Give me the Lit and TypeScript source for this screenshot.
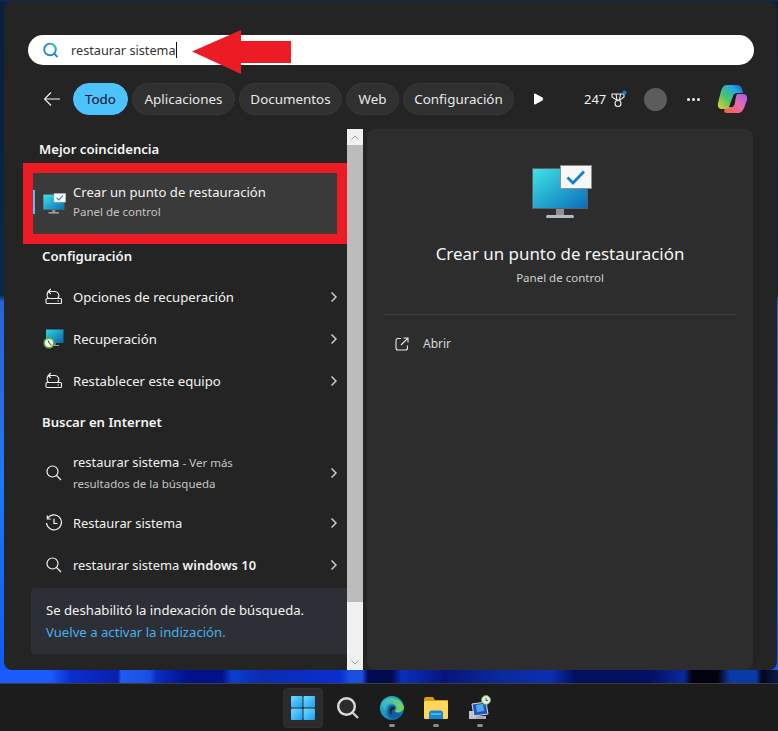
import { LitElement, html, css } from "lit";
import { customElement } from "lit/decorators.js";

const monitor = (w: number, h: number, id: string) => html`<svg width=${w} height=${h} viewBox="0 0 60 54">
  <defs><linearGradient id=${id} x1="0" y1="0" x2="1" y2="1"><stop offset="0" stop-color="#3fe4e6"/><stop offset="1" stop-color="#0a6cba"/></linearGradient></defs>
  <rect x="0.5" y="3.5" width="55" height="40" fill="url(#${id})" stroke="#5a6064" stroke-width="1"/>
  <rect x="24" y="44" width="8" height="6" fill="#8d9399"/>
  <rect x="14" y="50" width="28" height="3" rx="1.5" fill="#b4b9bd"/>
  <rect x="28.5" y="0.5" width="31" height="23" fill="#f7f7f7" stroke="#8a8f93" stroke-width="1"/>
  <path d="M35.5 12.5 L41 18 L52 6.5" fill="none" stroke="#0f7fd8" stroke-width="2.8"/>
</svg>`;

const resetIcon = html`<svg class="ic" width="18" height="18" viewBox="0 0 18 18" fill="none" stroke="#f2f2f2" stroke-width="1.1">
  <path d="M3.5 3.5 H9.5 A4 4 0 0 1 12.5 10.500"/><path d="M3.500 3.500 A5 5 0 0 0 3.500 10.500"/><path d="M5.800 1 L3.300 3.500 L5.800 6"/>
  <rect x="1" y="10.500" width="15.500" height="5" rx="1"/><path d="M12.500 13 h1.500"/>
</svg>`;

const recoveryIcon = html`<svg class="ic rec" width="21" height="20" viewBox="0 0 21 20">
  <defs><linearGradient id="rec" x1="0" y1="0" x2="1" y2="1"><stop offset="0" stop-color="#2fd6df"/><stop offset="1" stop-color="#0a63ae"/></linearGradient></defs>
  <rect x="3" y="0.500" width="17.500" height="13.500" fill="url(#rec)"/>
  <rect x="10" y="14" width="3" height="2" fill="#777"/><rect x="8" y="16" width="8" height="1" fill="#999"/>
  <circle cx="6" cy="14" r="4.800" fill="#f1f1f1" stroke="#55b52c" stroke-width="1.600"/>
  <path d="M5 11.500 L6.500 14.500 L8.500 16" fill="none" stroke="#333" stroke-width="1"/>
</svg>`;

const searchIcon = html`<svg class="ic" width="18" height="18" viewBox="0 0 18 18" fill="none" stroke="#f2f2f2" stroke-width="1.2">
  <circle cx="7.5" cy="7.5" r="5.5"/><path d="M11.5 11.5 L16 16"/>
</svg>`;

const historyIcon = html`<svg class="ic" width="18" height="18" viewBox="0 0 18 18" fill="none" stroke="#f2f2f2" stroke-width="1.2">
  <path d="M2.5 4.500 A7.5 7.5 0 1 1 1.500 9"/><path d="M2.300 1.500 V5 H5.800"/><path d="M9 4.800 V9.500 H12.500"/>
</svg>`;

const chevron = html`<svg class="chev" width="8" height="12" viewBox="0 0 8 12" fill="none" stroke="#c8c8c8" stroke-width="1.5"><path d="M1.500 1.500 L6 6 L1.500 10.500"/></svg>`;

@customElement("app-root")
export class AppRoot extends LitElement {
  static styles = css`
    :host { display: block; width: 778px; height: 731px; position: relative; overflow: hidden;
      font-family: "Noto Sans", "Open Sans", sans-serif; color: #f2f2f2; font-size: 13.15px;
      background: linear-gradient(180deg, #0d2a55 0, #0a1e3c 3px, #0b2748 295px, #2a62d8 302px, #2e6be0 400px, #1a7aff 480px, #1259f5 670px); }
    .panel { position: absolute; left: 4px; top: 1px; width: 773px; height: 669px; box-sizing: border-box;
      background: #242424; border-radius: 8px; padding: 34px 24px 0 24px; display: flex; flex-direction: column; }
    .strip { position: absolute; left: 0; top: 670px; width: 778px; height: 13px;
      background: linear-gradient(90deg, #1a5cff 0, #1a5cff 50px, #0a2fd0 70px, #0a1faa 118px, #1f5cf0 121px, #1a4fe0 150px, #0a2dc0 156px, #02108a 190px, #02108a 222px, #0a3fd0 232px, #0a2cb0 260px, #0a2fd0 340px, #1a4fe0 350px, #1a4fe0 362px, #020a50 368px, #020a50 392px, #0a30c0 402px, #06157a 445px, #0a2a9c 500px, #0a30b0 550px, #040f60 575px, #040f60 650px, #0a2a9c 684px, #02030f 692px, #02030f 718px, #0a3aa8 730px, #0a3aa8 756px, #02061c 762px, #0a1a4a 778px); }
    .search { height: 30px; background: #fff; border-radius: 15px; display: flex; align-items: center;
      padding-left: 15px; color: #333; margin-right: -1px; }
    .search span { margin-left: 12px; font-size: 12.7px; line-height: 30px; }
    .caret { width: 1px; height: 16px; background: #111; }
    .tabs { display: flex; align-items: center; height: 32px; margin-top: 18px; padding-left: 16px; }
    .back { margin-right: 13px; display: flex; }
    .tab { height: 32px; line-height: 30px; box-sizing: border-box; text-align: center; border: 1px solid #383838; background: #303030; border-radius: 16px;
      margin-right: 4px; font-size: 13.4px; color: #e8e8e8; white-space: nowrap; flex: none; }
    .tab.on { background: #4cc2ff; border-color: #4cc2ff; color: #111; }
    .t1 { width: 55px; }
    .t2 { width: 103px; }
    .t3 { width: 103px; }
    .t4 { width: 53px; }
    .t5 { width: 111px; }
    .right-tools { display: flex; align-items: center; margin-left: 15px; flex: none; }
    .count { margin-left: 40px; font-size: 13px; }
    .trophy { margin-left: 5px; }
    .avatar { width: 23px; height: 23px; border-radius: 50%; background: #5c5c5c; margin-left: 17px; }
    .dots { margin-left: 20px; display: flex; gap: 2px; }
    .dots i { width: 3px; height: 3px; border-radius: 50%; background: #eee; }
    .copilot { margin-left: 17px; display: flex; }
    .body { display: flex; margin-top: 14px; margin-left: -1px; flex: 1; min-height: 0; }
    .left { width: 324px; margin-left: -4px; display: flex; flex-direction: column; }
    .sec { font-weight: 600; font-size: 13.15px; line-height: 18px; color: #f5f5f5; margin-left: 19px; flex: none; }
    .best { margin-top: 11px; margin-left: 16px; }
    .s2 { margin-top: 3px; margin-bottom: 11px; }
    .s3 { margin-top: 11px; margin-bottom: 12px; }
    .redbox { border: 10px solid #ed1c24; height: 81px; box-sizing: border-box; background: #3a3a3a; display: flex; align-items: center; position: relative; margin-top: 5px; flex: none; }
    .redbox .bar { position: absolute; left: 0; top: 17px; width: 2px; height: 24px; background: #4cc2ff; }
    .redbox .icon { margin-left: 10px; width: 23px; display: flex; }
    .row { display: flex; align-items: center; height: 42px; padding-left: 22px; flex: none; }
    .row .ic { flex: none; }
    .row .ic.rec { margin-left: -2px; margin-right: -1px; }
    .iconbox { width: 28px; display: flex; }
    .row .lbl { flex: 1; white-space: nowrap; }
    .row .lbl.n { font-size: 12.9px; }
    .row .lbl strong { font-weight: 600; }
    .row .chev { margin-right: 9px; flex: none; }
    .row.two { height: 59px; }
    .row.two .lbl { line-height: 20px; }
    .muted { color: #c4c4c4; font-size: 11.5px; }
    .textcol { margin-left: 7px; margin-bottom: 4px; display: flex; flex-direction: column; }
    .textcol b { font-weight: 400; font-size: 13.1px; line-height: 20px; }
    .textcol small { color: #c4c4c4; font-size: 11.5px; line-height: 20px; }
    .notice { background: #2c2f36; border-radius: 4px 0 0 4px; margin: 2px 0 0 8px; height: 66px; box-sizing: border-box; flex: none;
      padding: 11px 0 0 15px; line-height: 22px; }
    .notice a { color: #4ab0e8; display: block; }
    .scroll { width: 16px; flex: none; background: #f0f0f0; display: flex; flex-direction: column; }
    .scroll .up, .scroll .dn { height: 16px; display: flex; align-items: center; justify-content: center; }
    .scroll .thumb { height: 457px; background: #bcbcbc; }
    .scroll .gap { flex: 1; }
    .detail { width: 386px; margin-left: 4px; height: 541px; background: #2d2d2d; border-radius: 8px; box-sizing: border-box;
      display: flex; flex-direction: column; align-items: center; padding-top: 36px; }
    .mon { margin-left: 4px; display: flex; }
    .dtitle { font-size: 16.9px; margin-top: 24px; line-height: 22px; color: #f5f5f5; }
    .dsub { font-size: 11.5px; color: #cfcfcf; margin-top: 5px; line-height: 16px; }
    .hr { height: 1px; width: 354px; background: #3f3f3f; margin-top: 28px; }
    .open { align-self: flex-start; margin: 21px 0 0 28px; display: flex; align-items: center; gap: 14px; font-size: 12px; line-height: 16px; color: #d8d8d8; }
    .taskbar { position: absolute; left: 0; top: 683px; width: 778px; height: 48px; box-sizing: border-box; padding-left: 9px;
      background: #1c1c1c; border-top: 1px solid #3d3d3d; display: flex; justify-content: center; align-items: center; }
    .tb { width: 40px; height: 40px; margin-right: 4px; display: flex; align-items: center; justify-content: center; border-radius: 4px; position: relative; box-sizing: border-box; }
    .tb.on { background: #2b2b2b; border: 1px solid #303030; margin-right: 5px; }
    .tb .pip { position: absolute; bottom: 1px; left: 17px; width: 6px; height: 3px; border-radius: 2px; background: #8a8a8a; }
    .arrow { position: absolute; left: 192px; top: 30px; }
  `;

  render() {
    return html`
      <div class="panel">
        <div class="search">
          <svg width="16" height="17" viewBox="0 0 16 17" fill="none" stroke-width="1.8">
            <circle cx="7" cy="7.5" r="5.8" stroke="#1a86d8"/>
            <path d="M7 1.7 A5.8 5.8 0 0 1 12.800 7.500" stroke="#2dc5b0"/>
            <path d="M11 11.5 L14.500 15" stroke="#1a86d8"/>
          </svg>
          <span>restaurar sistema</span><i class="caret"></i>
        </div>
        <div class="tabs">
          <span class="back"><svg width="16" height="14" viewBox="0 0 16 14" fill="none" stroke="#f2f2f2" stroke-width="1.2"><path d="M0.500 7 H16 M7 0.500 L0.500 7 L7 13.500"/></svg></span>
          <span class="tab on t1">Todo</span>
          <span class="tab t2">Aplicaciones</span>
          <span class="tab t3">Documentos</span>
          <span class="tab t4">Web</span>
          <span class="tab t5">Configuración</span>
          <div class="right-tools">
            <svg width="11" height="12" viewBox="0 0 11 12"><path d="M1 1.500 Q1 0 2.500 .8 L9.500 4.500 Q11 6 9.500 7.500 L2.500 11.200 Q1 12 1 10.500 Z" fill="#fff"/></svg>
            <span class="count">247</span>
            <svg class="trophy" width="16" height="18" viewBox="0 0 16 18" fill="none" stroke="#f0f0f0" stroke-width="1.1">
              <path d="M1 4 H13 V7 L9 10 H5.500 L1 7 Z M5 4 L6 10 M9.500 4 L8.500 10"/><circle cx="7" cy="13.500" r="3"/><circle cx="13.500" cy="2.500" r="2" fill="#0f7fd8" stroke="none"/>
            </svg>
            <i class="avatar"></i>
            <span class="dots"><i></i><i></i><i></i></span>
            <span class="copilot"><svg width="31" height="30" viewBox="0 0 31 30">
              <defs>
                <linearGradient id="c1" x1="0" y1="1" x2="1" y2="0"><stop offset="0" stop-color="#f5c92c"/><stop offset=".4" stop-color="#4cc46a"/><stop offset=".75" stop-color="#22a7e8"/><stop offset="1" stop-color="#1b4fd0"/></linearGradient>
                <linearGradient id="c2" x1="0" y1="1" x2="1" y2="0"><stop offset="0" stop-color="#f5603c"/><stop offset=".55" stop-color="#e86ab0"/><stop offset="1" stop-color="#a05be8"/></linearGradient>
              </defs>
              <path d="M19 10 H26 Q31 10 30 16 L27 24 Q25 29 21 29 H10 Q7 29 7 26 L11 23 H15 Q17 23 18 19 Z" fill="url(#c2)"/>
              <path d="M9 1 H20 Q24 1 25 5 L26 9 H20 Q17 9 16 13 L13 22 Q12 25 9 25 H5 Q0 25 1 19 L4 7 Q6 1 9 1 Z" fill="url(#c1)"/>
              <path d="M17 10 L20 10 L15 23 L12 23 Z" fill="#1c1c1c"/>
            </svg></span>
          </div>
        </div>
        <div class="body">
          <div class="left">
            <div class="sec best">Mejor coincidencia</div>
            <div class="redbox">
              <i class="bar"></i>
              <span class="icon">${monitor(23, 21, "scr1")}</span>
              <div class="textcol"><b>Crear un punto de restauración</b><small>Panel de control</small></div>
            </div>
            <div class="sec s2">Configuración</div>
            ${this.row(resetIcon, "Opciones de recuperación")}
            ${this.row(recoveryIcon, "Recuperación")}
            ${this.row(resetIcon, "Restablecer este equipo")}
            <div class="sec s3">Buscar en Internet</div>
            <div class="row two">
              <span class="iconbox">${searchIcon}</span>
              <span class="lbl n">restaurar sistema <span class="muted">- Ver más<br>resultados de la búsqueda</span></span>
              ${chevron}
            </div>
            ${this.row(historyIcon, "Restaurar sistema", true)}
            ${this.row(searchIcon, html`restaurar sistema <strong>windows 10</strong>`, true)}
            <div class="notice">Se deshabilitó la indexación de búsqueda.<a>Vuelve a activar la indización.</a></div>
          </div>
          <div class="scroll">
            <div class="up"><svg width="8" height="5" viewBox="0 0 8 5" fill="none" stroke="#999"><path d="M0.500 4.500 L4 1 L7.500 4.500"/></svg></div>
            <div class="thumb"></div>
            <div class="gap"></div>
            <div class="dn"><svg width="8" height="5" viewBox="0 0 8 5" fill="none" stroke="#999"><path d="M0.500 .5 L4 4 L7.500 .5"/></svg></div>
          </div>
          <div class="detail">
            <span class="mon">${monitor(60, 54, "scr2")}</span>
            <div class="dtitle">Crear un punto de restauración</div>
            <div class="dsub">Panel de control</div>
            <div class="hr"></div>
            <div class="open">
              <svg width="14" height="14" viewBox="0 0 14 14" fill="none" stroke="#e8e8e8" stroke-width="1.1"><path d="M6 1.500 H3 Q1 1.500 1 3.500 V11 Q1 13 3 13 H10.500 Q12.500 13 12.500 11 V8.500"/><path d="M6 8 L13 1 M8.500 1 H13 V5.500"/></svg>
              Abrir
            </div>
          </div>
        </div>
      </div>
      <div class="strip"></div>
      <div class="taskbar">
        <span class="tb on"><svg width="24" height="24" viewBox="0 0 24 24">
          <defs><linearGradient id="w" x1="0" y1="0" x2="1" y2="1"><stop offset="0" stop-color="#6fdcff"/><stop offset="1" stop-color="#1a9cf0"/></linearGradient></defs>
          <rect x="0" y="0" width="11.5" height="11.5" fill="url(#w)" rx="1"/><rect x="12.5" y="0" width="11.5" height="11.5" fill="url(#w)" rx="1"/><rect x="0" y="12.5" width="11.5" height="11.5" fill="url(#w)" rx="1"/><rect x="12.5" y="12.5" width="11.5" height="11.5" fill="url(#w)" rx="1"/>
        </svg></span>
        <span class="tb"><svg width="24" height="24" viewBox="0 0 24 24" fill="none"><circle cx="10.5" cy="10.5" r="8.3" stroke="#dcdcdc" stroke-width="2.4" fill="#2c2c2c"/><path d="M16.500 16.500 L22 22" stroke="#cfcfcf" stroke-width="2.4"/></svg></span>
        <span class="tb"><svg width="24" height="24" viewBox="0 0 24 24">
          <defs><linearGradient id="e1" x1="0" y1="0" x2="1" y2="1"><stop offset="0" stop-color="#2fc7c9"/><stop offset="1" stop-color="#0c59a4"/></linearGradient><linearGradient id="e2" x1="0" y1="0" x2="1" y2="0"><stop offset="0" stop-color="#33b5e0"/><stop offset="1" stop-color="#7ad84e"/></linearGradient></defs>
          <circle cx="12" cy="12" r="12" fill="url(#e1)"/><path d="M2 8 C6 0 20 0 24 11 C24 16 17 18 15 15 C19 12 14 6 9 8 C6 9 5 12 5 15 Z" fill="url(#e2)"/><path d="M8 13 C8 8 15 8 16 12 C13 14 15 18 21 18 C17 24 7 24 7 15 Z" fill="#0d5ea8"/><path d="M10 13 C12 10 15 11 15 13 C13 13 10 15 12 19 C10 18 9 15 10 13Z" fill="#1c1c1c"/>
        </svg><i class="pip"></i></span>
        <span class="tb"><svg width="24" height="22" viewBox="0 0 24 22">
          <path d="M0 2 Q0 0 2 0 H9 L11 3 H24 V20 Q24 22 22 22 H2 Q0 22 0 20 Z" fill="#d99a12"/><rect x="0" y="4" width="24" height="18" rx="1.5" fill="#ffd65c"/><path d="M5 22 V16 Q5 13.500 8 13.500 H16 Q19 13.500 19 16 V22 Z" fill="#1786d0"/><rect x="7" y="16" width="10" height="2" fill="#48b0ea"/>
        </svg><i class="pip"></i></span>
        <span class="tb"><svg width="24" height="26" viewBox="0 0 24 26">
          <rect x="1" y="16" width="8" height="8" fill="#bfc3c7"/><path d="M4 9 L18 7 L20 19 L6 21 Z" fill="#1e55c6" stroke="#d8d8d8"/><path d="M8 10 L15 9 L16 16 L9 17Z" fill="#58a6e8"/><circle cx="18" cy="5" r="4.5" fill="#e9e9e9" stroke="#55b52c"/><path d="M18 3 V5.500 H20" stroke="#333" fill="none" stroke-width=".8"/><rect x="8" y="21" width="10" height="3" fill="#a8acb0"/>
        </svg><i class="pip"></i></span>
      </div>
      <svg class="arrow" width="99" height="44" viewBox="0 0 99 44"><path d="M0 21.500 L49 0 V11 H99 V33 H49 V44 Z" fill="#ed1c24"/></svg>
    `;
  }

  row(icon: unknown, label: unknown, narrow = false) {
    return html`<div class="row"><span class="iconbox">${icon}</span><span class="lbl ${narrow ? "n" : ""}">${label}</span>${chevron}</div>`;
  }
}
